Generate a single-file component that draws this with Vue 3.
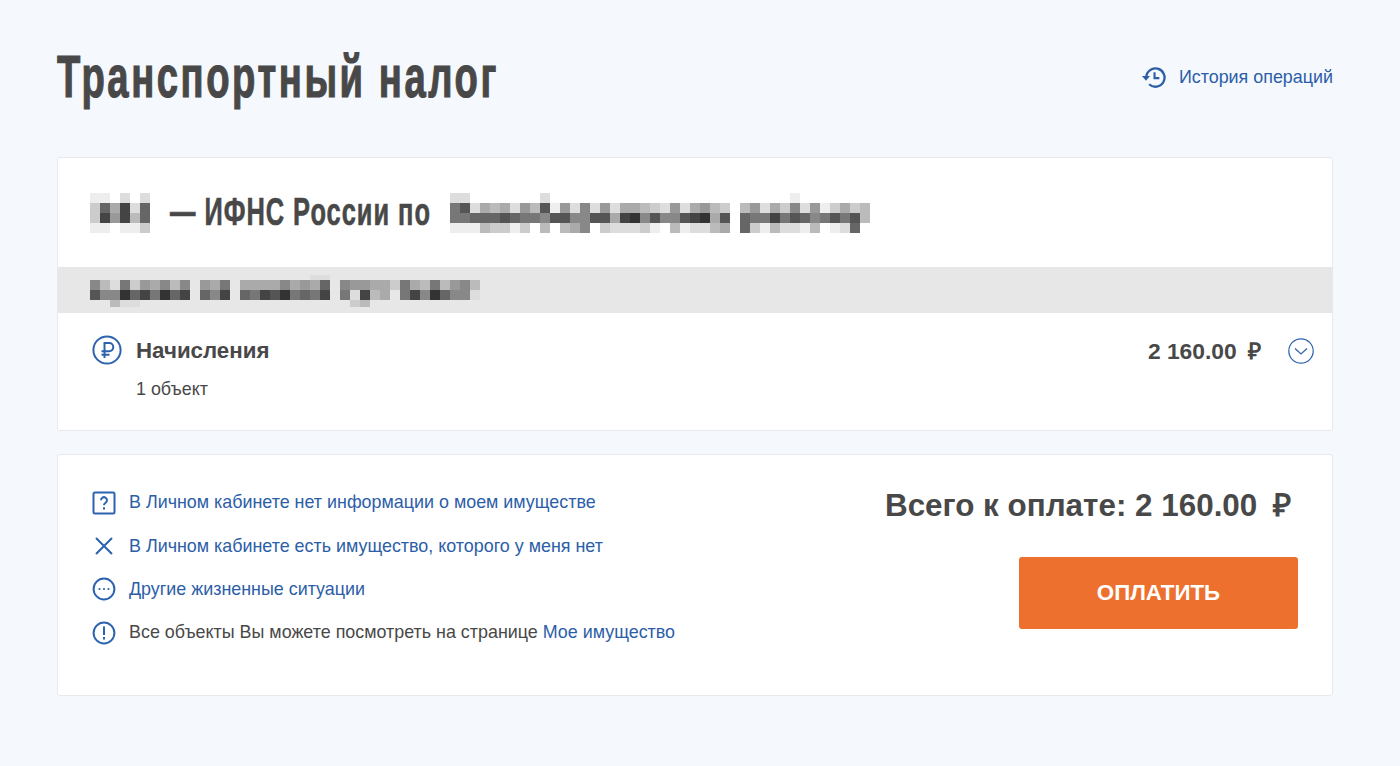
<script setup>
const mosaicA = ['eefdfdf', 'c6a4d6.', 'c494b6f', 'eefeec.']
const mosaicB = [
  '.dd.......df' + '.'.repeat(22) + 'fe.......',
  '.75dabad9b5e9d8d9daabcd9da9bcfb9dac8d9ecacb',
  'f7766656778558855a438588543a5.677475687575b',
  'feeebccec.bfba8.cdddcefbeddba.6cebddebfed6.'
]
const mosaicC = [
  '.'.repeat(22) + 'dd' + '.'.repeat(15),
  '8bd7c9a8b8.9a7.aaaa8a9a6.899aac7ab7b98b',
  '5883647364.684.674537674.7d4ba.7483688d',
  '..bdd' + '.'.repeat(21) + 'cb' + '.'.repeat(11)
]
const grey = (c) => {
  if (c === '.') return 'transparent'
  const v = parseInt(c, 16) * 17
  return `rgb(${v},${v},${v})`
}
const cells = (rows) => rows.flatMap((r) => r.split('').map(grey))
const colStyle = (rows) => ({ gridTemplateColumns: `repeat(${rows[0].length}, 10px)` })
</script>

<template>
  <main class="page">
    <header class="head">
      <h1 class="title">Транспортный налог</h1>
      <a class="history">
        <svg class="history-icon" viewBox="0 0 24 24" fill="none" stroke="currentColor" stroke-width="2.2">
          <path d="M5 12a8.8 8.8 0 1 1 2.8 6.5" />
          <path d="M1 10.5h7.6L4.8 15z" fill="currentColor" stroke="none" />
          <path d="M13 7v5.6h4.6" stroke-width="2" />
        </svg>
        История операций
      </a>
    </header>

    <section class="card card-main">
      <div class="inspection">
        <div class="mosaic" :style="colStyle(mosaicA)" aria-hidden="true">
          <i v-for="(c, i) in cells(mosaicA)" :key="i" :style="{ background: c }"></i>
        </div>
        <span class="inspection-box"><span class="inspection-text">— ИФНС России по</span></span>
        <div class="mosaic" :style="colStyle(mosaicB)" aria-hidden="true">
          <i v-for="(c, i) in cells(mosaicB)" :key="i" :style="{ background: c }"></i>
        </div>
      </div>
      <div class="band">
        <div class="mosaic mosaic-band" :style="colStyle(mosaicC)" aria-hidden="true">
          <i v-for="(c, i) in cells(mosaicC)" :key="i" :style="{ background: c }"></i>
        </div>
      </div>
      <div class="charge">
        <svg class="charge-icon" viewBox="0 0 30 30" fill="none" stroke="#2c62ae" stroke-width="2">
          <circle cx="15" cy="15" r="13.6" />
          <path d="M12.5 23V8h4.7a4 4 0 0 1 0 8.2H9.5M9.5 19.8h8" />
        </svg>
        <div class="charge-info">
          <div class="charge-name">Начисления</div>
          <div class="charge-count">1 объект</div>
        </div>
        <div class="charge-sum">2 160.00 <span class="rub">₽</span></div>
        <svg class="chevron" viewBox="0 0 26 26" fill="none" stroke="#2c62ae" stroke-width="1.2">
          <circle cx="13" cy="13" r="12.2" />
          <path d="M7 10.5l6 5.5 6-5.5" />
        </svg>
      </div>
    </section>

    <section class="card card-pay">
      <ul class="links">
        <li>
          <svg class="ico" viewBox="0 0 24 24" fill="none" stroke="#2c62ae" stroke-width="2">
            <rect x="1.5" y="1.5" width="21" height="21" rx="1.5" />
            <path d="M9 9.2a3 3 0 1 1 4.6 2.5c-1 .7-1.6 1.2-1.6 2.6" />
            <path d="M12 16.2v2.2" />
          </svg>
          <a>В Личном кабинете нет информации о моем имуществе</a>
        </li>
        <li>
          <svg class="ico" viewBox="0 0 24 24" fill="none" stroke="#2c62ae" stroke-width="2">
            <path d="M4 4l16 16M20 4L4 20" />
          </svg>
          <a>В Личном кабинете есть имущество, которого у меня нет</a>
        </li>
        <li>
          <svg class="ico" viewBox="0 0 24 24" fill="none" stroke="#2c62ae" stroke-width="2">
            <circle cx="12" cy="12" r="10.4" />
            <circle cx="7.5" cy="12" r="1.1" fill="#2c62ae" stroke="none" />
            <circle cx="12" cy="12" r="1.1" fill="#2c62ae" stroke="none" />
            <circle cx="16.5" cy="12" r="1.1" fill="#2c62ae" stroke="none" />
          </svg>
          <a>Другие жизненные ситуации</a>
        </li>
        <li>
          <svg class="ico" viewBox="0 0 24 24" fill="none" stroke="#2c62ae" stroke-width="2">
            <circle cx="12" cy="12" r="10.4" />
            <path d="M12 5.5v8.5M12 16v2.4" />
          </svg>
          <span>Все объекты Вы можете посмотреть на странице <a>Мое имущество</a></span>
        </li>
      </ul>
      <div class="pay">
        <div class="total">Всего к оплате: 2 160.00 <span class="rub rub-total">₽</span></div>
        <button class="pay-btn" type="button">ОПЛАТИТЬ</button>
      </div>
    </section>
  </main>
</template>

<style>
html, body { margin: 0; background: #f5f8fc; }
</style>

<style scoped>
.page {
  height: 766px;
  box-sizing: border-box;
  padding: 0 67px 0 57px;
  font-family: "Liberation Sans", Arial, sans-serif;
  color: #484848;
  background: #f5f8fc;
}
.head {
  display: flex;
  justify-content: space-between;
  align-items: center;
  height: 157px;
  padding-bottom: 3px;
  box-sizing: border-box;
}
.title {
  margin: 0;
  font-size: 60px;
  line-height: 70px;
  font-weight: 700;
  letter-spacing: 4px;
  white-space: nowrap;
  color: #484848;
  -webkit-text-stroke: 1.2px #484848;
  transform: scaleX(0.637);
  transform-origin: left center;
}
.history {
  display: flex;
  align-items: center;
  gap: 13px;
  font-size: 17.9px;
  color: #2c5ea8;
}
.history-icon { width: 25px; height: 25px; }
.card {
  background: #fff;
  border: 1px solid #e7e9ec;
  border-radius: 3px;
  box-sizing: border-box;
}
.card-main { height: 273.5px; }
.inspection {
  display: flex;
  align-items: center;
  height: 109px;
  padding-left: 32px;
  box-sizing: border-box;
}
.inspection-box {
  width: 260px;
  margin: 0 10px 2px;
}
.inspection-text {
  display: inline-block;
  font-size: 39px;
  font-weight: 700;
  letter-spacing: 1.5px;
  white-space: nowrap;
  color: #484848;
  -webkit-text-stroke: 0.6px #484848;
  transform: scaleX(0.652);
  transform-origin: left center;
}
.mosaic {
  display: grid;
  grid-auto-rows: 10px;
}
.band {
  height: 46px;
  background: #e7e7e7;
  padding: 8px 0 0 32px;
  box-sizing: border-box;
}
.mosaic-band { grid-template-rows: 5px 10px 10px 7px; }
.charge {
  display: flex;
  align-items: flex-start;
  padding: 22px 18px 0 34px;
}
.charge-icon { width: 30px; height: 30px; margin-right: 14px; }
.charge-info { flex: 1; }
.charge-name { font-size: 22.3px; line-height: 30px; margin-top: 1px; font-weight: 700; }
.charge-count { font-size: 17.9px; line-height: 24px; margin-top: 11px; }
.charge-sum { font-size: 22.8px; line-height: 30px; margin-top: 1px; font-weight: 700; }
.rub { margin-left: 5px; }
.chevron { width: 26px; height: 26px; margin: 3px 0 0 27px; }
.card-pay {
  margin-top: 23.5px;
  height: 242px;
  display: flex;
  justify-content: space-between;
  padding: 26px 34px 0 34px;
}
.links {
  list-style: none;
  margin: 0;
  padding: 0;
  font-size: 17.9px;
}
.links li {
  display: flex;
  align-items: center;
  gap: 13px;
  height: 43.4px;
}
.links a { color: #2c5ea8; }
.ico { width: 24px; height: 24px; flex: none; }
.pay {
  display: flex;
  flex-direction: column;
  align-items: flex-end;
}
.total {
  font-size: 31.4px;
  line-height: 50px;
  font-weight: 700;
  margin-right: 7px;
  white-space: nowrap;
}
.rub-total { margin-left: 7px; }
.pay-btn {
  margin-top: 26px;
  width: 279px;
  height: 72px;
  border: none;
  border-radius: 3px;
  background: #ee702e;
  color: #fff;
  font: 700 22.3px "Liberation Sans", Arial, sans-serif;
}
</style>
